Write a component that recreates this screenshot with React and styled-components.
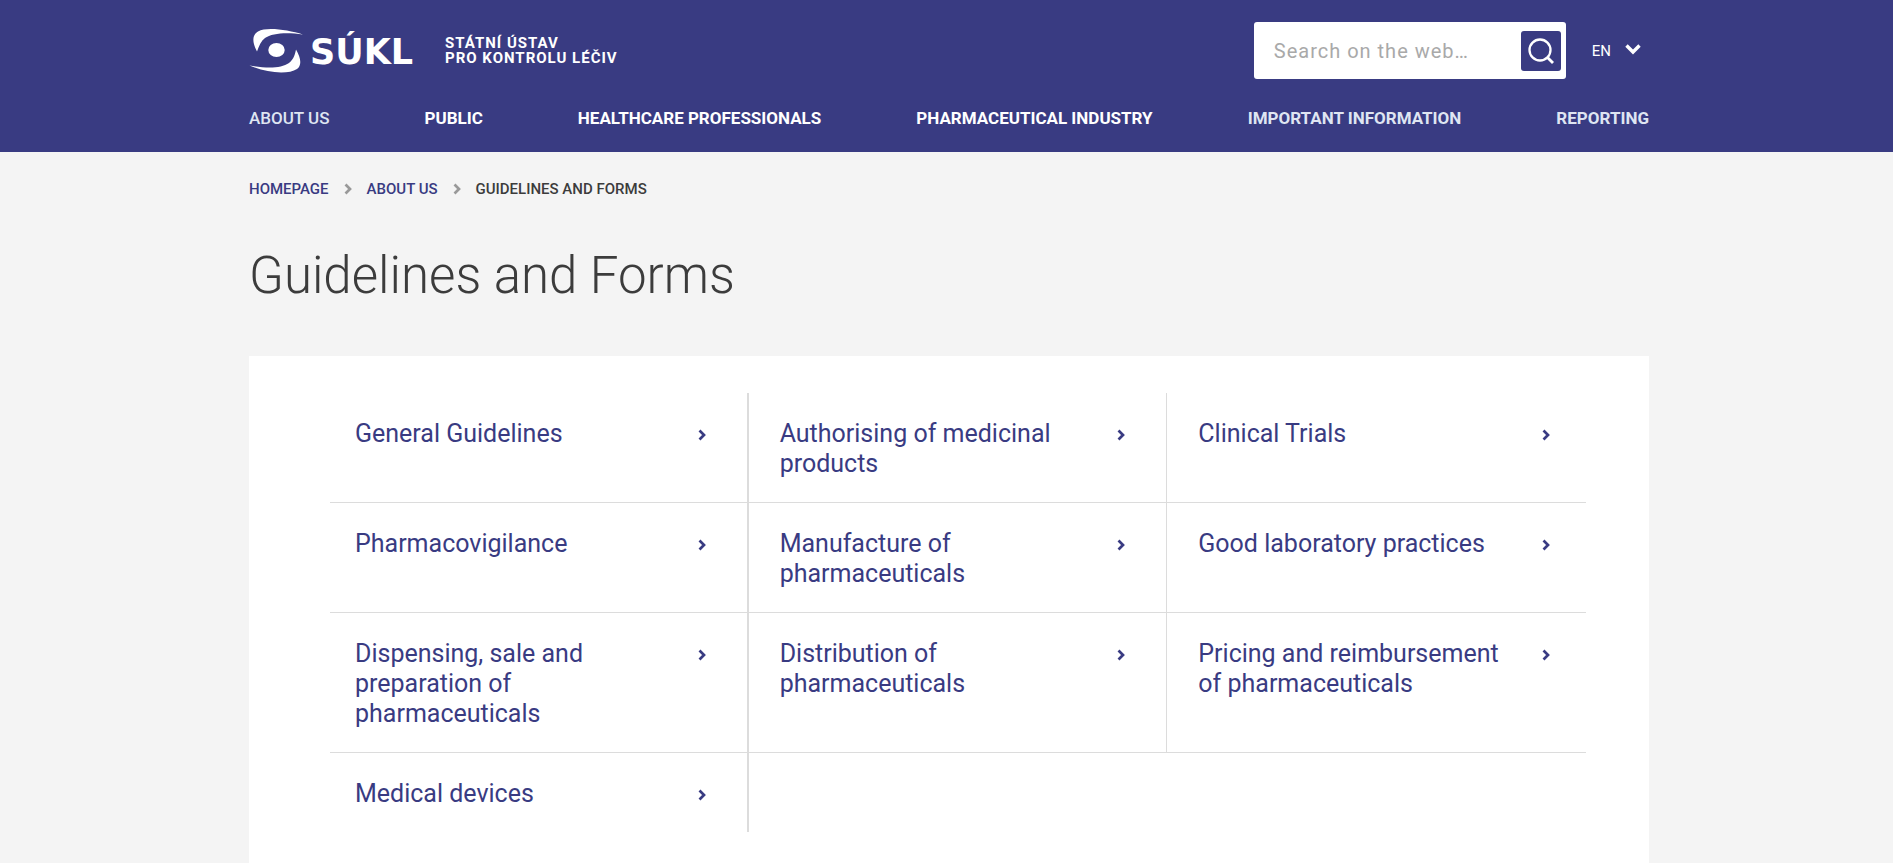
import React, { useState } from 'react';
import styled, { createGlobalStyle } from 'styled-components';

const colors = {
  primary: '#393b82',
  background: '#f4f4f4',
  text: '#3c3c3c',
  line: '#dcdcdc',
};

const GlobalStyle = createGlobalStyle`
  * {
    box-sizing: border-box;
  }

  body {
    margin: 0;
    background: ${colors.background};
    color: ${colors.text};
    font-family: Roboto, 'Liberation Sans', sans-serif;
  }

  a {
    color: inherit;
    text-decoration: none;
  }
`;

const Container = styled.div`
  max-width: 1405px;
  margin: 0 auto;
  padding-left: 5px;
`;

const Header = styled.header`
  background: ${colors.primary};
  color: #fff;
`;

const TopBar = styled.div`
  display: flex;
  align-items: center;
  justify-content: space-between;
  padding-top: 22px;
`;

const Brand = styled.a`
  display: flex;
  align-items: center;
  gap: 28px;
`;

const Logo = styled.svg`
  display: block;
  width: 168px;
  height: 48px;
  overflow: visible;
`;

const BrandName = styled.span`
  font-size: 15px;
  font-weight: 700;
  letter-spacing: 1px;
  line-height: 15px;
  text-transform: uppercase;
`;

const Tools = styled.div`
  display: flex;
  align-items: center;
  gap: 26px;
  padding-right: 8px;
`;

const SearchForm = styled.form`
  display: flex;
  align-items: center;
  width: 312px;
  height: 57px;
  padding: 0 5px 0 20px;
  border-radius: 3px;
  background: #fff;
`;

const SearchInput = styled.input`
  flex: 1;
  min-width: 0;
  padding: 0;
  border: none;
  outline: none;
  background: none;
  color: ${colors.text};
  font: 400 20px Roboto, sans-serif;
  letter-spacing: 1px;

  &::placeholder {
    color: #a9a9a9;
    opacity: 1;
  }
`;

const SearchButton = styled.button`
  display: flex;
  align-items: center;
  justify-content: center;
  width: 40px;
  height: 40px;
  padding: 0;
  border: none;
  border-radius: 3px;
  background: ${colors.primary};
  cursor: pointer;
`;

const Language = styled.button`
  display: flex;
  align-items: center;
  gap: 14px;
  padding: 0;
  border: none;
  background: none;
  color: #fff;
  font: 400 15px Roboto, sans-serif;
  cursor: pointer;

  svg {
    margin-bottom: 3px;
  }
`;

const Nav = styled.nav`
  display: flex;
  justify-content: space-between;
  padding: 27px 0 22px;
`;

const NavLink = styled.a`
  color: ${(props) => (props.$soft ? '#dfe5f2' : '#fff')};
  font-size: 17px;
  font-weight: ${(props) => (props.$light ? 500 : 700)};
  line-height: 24px;
  text-transform: uppercase;
`;

const Breadcrumb = styled.nav`
  display: flex;
  align-items: center;
  gap: 15px;
  padding-top: 27px;
  color: ${colors.text};
  font-size: 15px;
  font-weight: 500;
  line-height: 20px;
  text-transform: uppercase;

  a {
    color: ${colors.primary};
  }
`;

const Title = styled.h1`
  margin: 47px 0 50px;
  font-size: 51px;
  font-weight: 300;
  line-height: 60px;
`;

const Card = styled.main`
  padding: 37px 63px 60px 81px;
  background: #fff;
`;

const Grid = styled.div`
  display: grid;
  grid-template-columns: repeat(3, 1fr);
`;

const Cell = styled.a`
  display: flex;
  align-items: flex-start;
  justify-content: space-between;
  gap: 16px;
  padding: 26px 41px 23px 31px;
  border-right: 1px solid ${colors.line};
  border-bottom: 1px solid ${colors.line};
  color: ${colors.primary};
  font-size: 25px;
  line-height: 30px;

  &:nth-child(3n + 1) {
    padding-left: 25px;
    border-right-width: 2px;
  }

  &:nth-child(3n) {
    padding-right: 36px;
    border-right: none;
  }

  &:last-child {
    border-bottom: none;
  }

  svg {
    flex: none;
    margin-top: 10px;
  }
`;

const menu = [
  { label: 'About us', light: true, soft: true },
  { label: 'Public' },
  { label: 'Healthcare professionals' },
  { label: 'Pharmaceutical industry' },
  { label: 'Important information', soft: true },
  { label: 'Reporting', soft: true },
];

const sections = [
  'General Guidelines',
  'Authorising of medicinal products',
  'Clinical Trials',
  'Pharmacovigilance',
  'Manufacture of pharmaceuticals',
  'Good laboratory practices',
  'Dispensing, sale and preparation of pharmaceuticals',
  'Distribution of pharmaceuticals',
  'Pricing and reimbursement of pharmaceuticals',
  'Medical devices',
];

function Chevron({ color }) {
  return (
    <svg width="8" height="12" viewBox="0 0 8 12" aria-hidden="true">
      <path d="M1.5 1.5 L6 6 L1.5 10.5" fill="none" stroke={color} strokeWidth="2.7" />
    </svg>
  );
}

function App() {
  const [search, setSearch] = useState('');

  return (
    <>
      <GlobalStyle />
      <Header>
        <Container>
          <TopBar>
            <Brand href="#">
              <Logo viewBox="0 0 168 48" fill="#fff" role="img" aria-label="SÚKL">
                <path d="M8 24.500C3 15 3 8 9 4.500C18 -.5 39 3 54 7.500C38 5 23 6 16 11C12 14 10 19 8 24.500Z" />
                <path d="M47 22.500C52 31 53 38 48 42C39 48 17 46 .5 38.500C18 41.500 32 41.500 40 36C45 32 46 27 47 22.500Z" />
                <ellipse cx="27.500" cy="23" rx="8.200" ry="7" />
                <text x="61" y="37" fontFamily="DejaVu Sans" fontWeight="700" fontSize="35">
                  SÚKL
                </text>
              </Logo>
              <BrandName>
                Státní ústav
                <br />
                pro kontrolu léčiv
              </BrandName>
            </Brand>
            <Tools>
              <SearchForm role="search" onSubmit={(e) => e.preventDefault()}>
                <SearchInput
                  type="text"
                  aria-label="Search on the web"
                  placeholder="Search on the web…"
                  value={search}
                  onChange={(e) => setSearch(e.target.value)}
                />
                <SearchButton type="submit" aria-label="Search">
                  <svg width="26" height="26" viewBox="0 0 26 26" fill="none" stroke="#fff">
                    <circle cx="12" cy="12" r="10.500" strokeWidth="2.300" />
                    <path d="M19 19L25 25" strokeWidth="2.800" />
                  </svg>
                </SearchButton>
              </SearchForm>
              <Language type="button">
                EN
                <svg width="16" height="11" viewBox="0 0 16 11" aria-hidden="true">
                  <path d="M1.500 1.500L8 8L14.500 1.500" fill="none" stroke="#fff" strokeWidth="3.400" />
                </svg>
              </Language>
            </Tools>
          </TopBar>
          <Nav>
            {menu.map((item) => (
              <NavLink key={item.label} href="#" $soft={item.soft} $light={item.light}>
                {item.label}
              </NavLink>
            ))}
          </Nav>
        </Container>
      </Header>
      <Container>
        <Breadcrumb aria-label="Breadcrumb">
          <a href="#">Homepage</a>
          <Chevron color="#999" />
          <a href="#">About us</a>
          <Chevron color="#999" />
          <span>Guidelines and Forms</span>
        </Breadcrumb>
        <Title>Guidelines and Forms</Title>
        <Card>
          <Grid>
            {sections.map((section) => (
              <Cell key={section} href="#">
                {section}
                <Chevron color={colors.primary} />
              </Cell>
            ))}
          </Grid>
        </Card>
      </Container>
    </>
  );
}

export default App;
